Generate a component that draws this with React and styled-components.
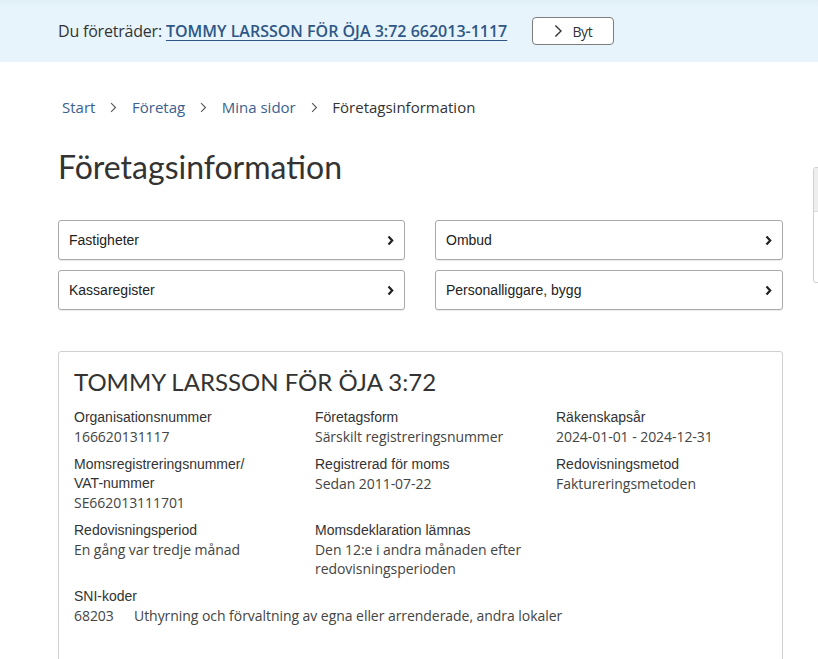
import React from "react";
import styled, { createGlobalStyle } from "styled-components";

const Global = createGlobalStyle`
  html, body { margin: 0; padding: 0; background: #fff; }
  body { font-family: "Open Sans", "Liberation Sans", sans-serif; color: #333; overflow: hidden; }
  * { box-sizing: border-box; }
`;

const TopBar = styled.div`
  height: 62px;
  background: linear-gradient(#dfeef7 0px, #e8f4fb 8px, #e8f4fb 100%);
  display: flex;
  align-items: center;
  padding-left: 58px;
  gap: 25px;
`;

const Representing = styled.div`
  font-family: "Open Sans", sans-serif;
  font-size: 16px;
  letter-spacing: -0.2px;
  color: #333;
  a {
    color: #2e5787;
    font-weight: 600;
    letter-spacing: 0;
    text-decoration: underline;
    text-underline-offset: 3px;
  }
`;

const SwitchButton = styled.button`
  width: 82px;
  height: 28px;
  border: 1px solid #7d7d7d;
  border-radius: 4px;
  background: #fff;
  display: flex;
  align-items: center;
  justify-content: center;
  gap: 10px;
  font-family: "Open Sans", sans-serif;
  font-size: 14px;
  color: #333;
  padding: 0;
  letter-spacing: -0.3px;
`;

const Layout = styled.div`
  display: flex;
  align-items: flex-start;
`;

const Main = styled.main`
  width: 725px;
  margin-left: 58px;
  flex-shrink: 0;
`;

const Aside = styled.aside`
  margin-left: 30px;
  margin-top: 105px;
  width: 200px;
  height: 116px;
  border: 1px solid #cfcfcf;
  border-radius: 3px;
  flex-shrink: 0;
  overflow: hidden;
`;

const AsideHead = styled.div`
  height: 44px;
  background: #eeeeee;
  border-bottom: 1px solid #dcdcdc;
`;

const Crumbs = styled.nav`
  display: flex;
  align-items: center;
  gap: 15px;
  margin-top: 34px;
  padding-left: 4px;
  height: 22px;
  font-family: "Open Sans", sans-serif;
  font-size: 15px;
  letter-spacing: 0;
`;

const Crumb = styled.a`
  color: ${(p) => (p.$current ? "#333" : "#3a6190")};
  text-decoration: none;
`;

const Heading = styled.h1`
  font-family: Lato, "Open Sans", sans-serif;
  font-weight: 400;
  font-size: 32px;
  color: #333;
  margin: 29px 0 0 0;
  line-height: 40px;
  height: 40px;
`;

const Links = styled.div`
  display: grid;
  grid-template-columns: 347px 348px;
  column-gap: 30px;
  row-gap: 10px;
  margin-top: 33px;
`;

const LinkCard = styled.a`
  height: 40px;
  border: 1px solid #a9a9a9;
  border-radius: 3px;
  display: flex;
  align-items: center;
  justify-content: space-between;
  padding: 0 10px 0 10px;
  font-family: Arial, "Liberation Sans", sans-serif;
  font-size: 14px;
  color: #222;
  text-decoration: none;
  box-shadow: 0 1px 1px rgba(0, 0, 0, 0.08);
`;

const InfoCard = styled.section`
  margin-top: 41px;
  border: 1px solid #d0d0d0;
  border-radius: 3px;
  padding: 15px 15px 40px 15px;
  min-height: 320px;
`;

const Title = styled.h2`
  font-family: Lato, "Open Sans", sans-serif;
  font-weight: 400;
  font-size: 24px;
  line-height: 30px;
  margin: 0 0 11px 0;
  color: #333;
`;

const Grid = styled.div`
  display: grid;
  grid-template-columns: 241px 241px 1fr;
  row-gap: 9px;
`;

const Field = styled.div`
  display: flex;
  flex-direction: column;
`;

const Label = styled.div`
  font-family: Arial, "Liberation Sans", sans-serif;
  font-size: 14px;
  line-height: 19px;
  color: #333;
`;

const Value = styled.div`
  font-family: "Open Sans", sans-serif;
  font-size: 14px;
  line-height: 19px;
  color: #444;
  letter-spacing: -0.05px;
`;

const SniBlock = styled.div`
  margin-top: 9px;
`;

const SniRow = styled.div`
  display: flex;
  font-family: "Open Sans", sans-serif;
  font-size: 14px;
  line-height: 19px;
  color: #444;
  letter-spacing: -0.05px;
`;

const SniCode = styled.span`
  width: 60px;
  flex-shrink: 0;
`;

const ThinChevron = ({ size = 10, color = "#555" }) => (
  <svg width={size * 0.6} height={size} viewBox="0 0 6 10" fill="none">
    <path d="M1 1 L5 5 L1 9" stroke={color} strokeWidth="1" />
  </svg>
);

const BoldChevron = () => (
  <svg width="7" height="11" viewBox="0 0 7 11" fill="none">
    <path d="M1.5 1.5 L5.2 5.5 L1.5 9.5" stroke="#222" strokeWidth="2.2" />
  </svg>
);

const fields = [
  { label: ["Organisationsnummer"], value: ["166620131117"] },
  { label: ["Företagsform"], value: ["Särskilt registreringsnummer"] },
  { label: ["Räkenskapsår"], value: ["2024-01-01 - 2024-12-31"] },
  { label: ["Momsregistreringsnummer/", "VAT-nummer"], value: ["SE662013111701"] },
  { label: ["Registrerad för moms"], value: ["Sedan 2011-07-22"] },
  { label: ["Redovisningsmetod"], value: ["Faktureringsmetoden"] },
  { label: ["Redovisningsperiod"], value: ["En gång var tredje månad"] },
  { label: ["Momsdeklaration lämnas"], value: ["Den 12:e i andra månaden efter", "redovisningsperioden"] },
];

const links = ["Fastigheter", "Ombud", "Kassaregister", "Personalliggare, bygg"];

export default function App() {
  return (
    <>
      <Global />
      <TopBar>
        <Representing>
          Du företräder: <a href="#">TOMMY LARSSON FÖR ÖJA 3:72 662013-1117</a>
        </Representing>
        <SwitchButton>
          <ThinChevron size={14} color="#333" />
          Byt
        </SwitchButton>
      </TopBar>
      <Layout>
        <Main>
          <Crumbs>
            <Crumb href="#">Start</Crumb>
            <ThinChevron size={11} />
            <Crumb href="#">Företag</Crumb>
            <ThinChevron size={11} />
            <Crumb href="#">Mina sidor</Crumb>
            <ThinChevron size={11} />
            <Crumb $current>Företagsinformation</Crumb>
          </Crumbs>
          <Heading>Företagsinformation</Heading>
          <Links>
            {links.map((l) => (
              <LinkCard href="#" key={l}>
                {l}
                <BoldChevron />
              </LinkCard>
            ))}
          </Links>
          <InfoCard>
            <Title>TOMMY LARSSON FÖR ÖJA 3:72</Title>
            <Grid>
              {fields.map((f, i) => (
                <Field key={i}>
                  {f.label.map((t) => (
                    <Label key={t}>{t}</Label>
                  ))}
                  {f.value.map((t) => (
                    <Value key={t}>{t}</Value>
                  ))}
                </Field>
              ))}
            </Grid>
            <SniBlock>
              <Label>SNI-koder</Label>
              <SniRow>
                <SniCode>68203</SniCode>
                <span>Uthyrning och förvaltning av egna eller arrenderade, andra lokaler</span>
              </SniRow>
            </SniBlock>
          </InfoCard>
        </Main>
        <Aside>
          <AsideHead />
        </Aside>
      </Layout>
    </>
  );
}
